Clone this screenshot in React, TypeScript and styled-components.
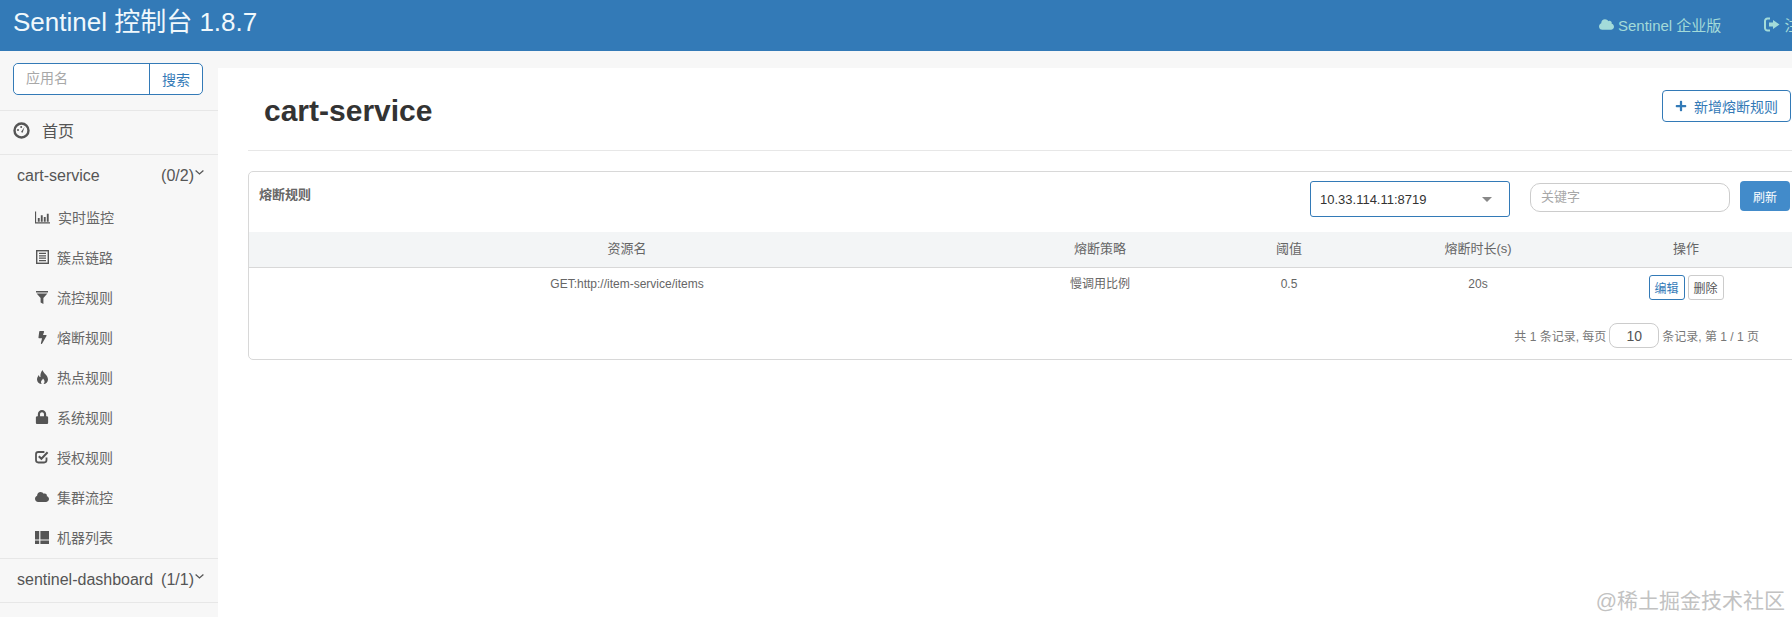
import { ReactNode } from 'react';
import styled, { createGlobalStyle } from 'styled-components';
import { FaBolt, FaCloud, FaLock, FaPlus } from 'react-icons/fa';

const GlobalStyle = createGlobalStyle`
  html, body {
    margin: 0;
    padding: 0;
    overflow: hidden;
    background: #fff;
    font-family: 'Liberation Sans', 'Noto Sans CJK SC', sans-serif;
  }
  * {
    box-sizing: border-box;
  }
`;

const GaugeIcon = () => (
  <svg width="17" height="17" viewBox="0 0 17 17">
    <circle cx="8.5" cy="8.5" r="7" fill="none" stroke="currentColor" strokeWidth="2.4" />
    <path d="M8 10 L11.5 5 L9.6 10.8 Z" fill="currentColor" />
    <circle cx="5" cy="8" r="1" fill="currentColor" />
    <circle cx="8.2" cy="5" r="1" fill="currentColor" />
  </svg>
);

const BarsIcon = () => (
  <svg width="15" height="13" viewBox="0 0 16 13">
    <path d="M0 0h1.2v11.6H16V13H0Z" fill="currentColor" />
    <path d="M3 7h2v4H3ZM6.2 4h2v7h-2ZM9.4 6h2v5h-2ZM12.6 2.5h2V11h-2Z" fill="currentColor" />
  </svg>
);

const ListIcon = () => (
  <svg width="13" height="14" viewBox="0 0 13 14">
    <rect x="0.7" y="0.7" width="11.6" height="12.6" fill="none" stroke="currentColor" strokeWidth="1.4" />
    <path d="M3 3.4h7M3 5.8h7M3 8.2h7M3 10.6h7" stroke="currentColor" strokeWidth="1.2" />
  </svg>
);

const FunnelIcon = () => (
  <svg width="12" height="13" viewBox="0 0 12 13">
    <path d="M0 0h12v1.4H0ZM0.6 2.4h10.8L7.4 7v6l-2.8-1.6V7Z" fill="currentColor" />
  </svg>
);

const FlameIcon = () => (
  <svg width="13" height="14" viewBox="0 0 13 14">
    <path
      d="M6.5 0C7 3 12 5 12 9.5 12 12 10 14 7.5 14 9 12.5 9 10.5 7 8.5 6.5 10 5 10.5 5 12 5 13 5.5 13.6 6 14 3 14 1 12 1 9.5 1 7.5 2 6 3 5 3 6.5 3.5 7 4.5 7 4 4 5 2 6.5 0Z"
      fill="currentColor"
    />
  </svg>
);

const CheckBoxIcon = () => (
  <svg width="14" height="14" viewBox="0 0 14 14">
    <path d="M11.5 7.5v2.6a2.4 2.4 0 0 1-2.4 2.4H3.4A2.4 2.4 0 0 1 1 10.1V4.4A2.4 2.4 0 0 1 3.4 2h6" fill="none" stroke="currentColor" strokeWidth="1.8" />
    <path d="M3.8 6.2 6.4 8.8 12.6 2.2" fill="none" stroke="currentColor" strokeWidth="2" />
  </svg>
);

const BlocksIcon = () => (
  <svg width="14" height="13" viewBox="0 0 14 13">
    <path d="M0 0h4.2v8.4H0ZM5.4 0H14v8.4H5.4ZM0 9.4h4.2V13H0ZM5.4 9.4H14V13H5.4Z" fill="currentColor" />
  </svg>
);

const SignOutIcon = () => (
  <svg width="16" height="15" viewBox="0 0 16 14">
    <path d="M6 1H3.5A2.5 2.5 0 0 0 1 3.5v7A2.5 2.5 0 0 0 3.5 13H6" fill="none" stroke="currentColor" strokeWidth="2" />
    <path d="M9 2.5 15.5 7 9 11.5V9H5V5h4Z" fill="currentColor" />
  </svg>
);

const ChevronIcon = () => (
  <svg width="9" height="5" viewBox="0 0 9 5">
    <path d="M0.6 0.6 4.5 4 8.4 0.6" fill="none" stroke="currentColor" strokeWidth="1.3" />
  </svg>
);

interface MenuEntry {
  label: string;
  icon: ReactNode;
}

const menuEntries: MenuEntry[] = [
  { label: '实时监控', icon: <BarsIcon /> },
  { label: '簇点链路', icon: <ListIcon /> },
  { label: '流控规则', icon: <FunnelIcon /> },
  { label: '熔断规则', icon: <FaBolt size={13} /> },
  { label: '热点规则', icon: <FlameIcon /> },
  { label: '系统规则', icon: <FaLock size={14} /> },
  { label: '授权规则', icon: <CheckBoxIcon /> },
  { label: '集群流控', icon: <FaCloud size={14} /> },
  { label: '机器列表', icon: <BlocksIcon /> },
];

const App = () => (
  <Page>
    <GlobalStyle />
    <TopBar>
      <Brand>Sentinel 控制台 1.8.7</Brand>
      <TopLinks>
        <TopLink>
          <FaCloud size={15} /> Sentinel 企业版
        </TopLink>
        <TopLink>
          <SignOutIcon /> 注销
        </TopLink>
      </TopLinks>
    </TopBar>
    <Body>
      <Sidebar>
        <SearchBox>
          <SearchInput placeholder="应用名" />
          <SearchButton>搜索</SearchButton>
        </SearchBox>
        <HomeRow>
          <GaugeIcon />
          首页
        </HomeRow>
        <AppRow>
          <span>cart-service</span>
          <AppCount>
            (0/2)
            <ChevronIcon />
          </AppCount>
        </AppRow>
        <MenuList>
          {menuEntries.map(entry => (
            <MenuItem key={entry.label}>
              <MenuIcon>{entry.icon}</MenuIcon>
              {entry.label}
            </MenuItem>
          ))}
        </MenuList>
        <AppRow $bordered>
          <span>sentinel-dashboard</span>
          <AppCount>
            (1/1)
            <ChevronIcon />
          </AppCount>
        </AppRow>
      </Sidebar>
      <Main>
        <PageHead>
          <PageTitle>cart-service</PageTitle>
          <AddButton>
            <FaPlus size={12} />
            新增熔断规则
          </AddButton>
        </PageHead>
        <Card>
          <CardBar>
            <CardTitle>熔断规则</CardTitle>
            <MachineSelect>
              10.33.114.11:8719
              <Caret />
            </MachineSelect>
            <KeywordInput placeholder="关键字" />
            <RefreshButton>刷新</RefreshButton>
          </CardBar>
          <HeadRow>
            <span>资源名</span>
            <span>熔断策略</span>
            <span>阈值</span>
            <span>熔断时长(s)</span>
            <span>操作</span>
          </HeadRow>
          <DataRow>
            <span>GET:http://item-service/items</span>
            <span>慢调用比例</span>
            <span>0.5</span>
            <span>20s</span>
            <Actions>
              <ActionButton $primary>编辑</ActionButton>
              <ActionButton>删除</ActionButton>
            </Actions>
          </DataRow>
          <Pager>
            共 1 条记录, 每页
            <PagerInput defaultValue="10" />
            条记录, 第 1 / 1 页
          </Pager>
        </Card>
      </Main>
    </Body>
    <Watermark>@稀土掘金技术社区</Watermark>
  </Page>
);

const Page = styled.div`
  position: relative;
  width: 1792px;
  height: 617px;
  overflow: hidden;
  background: #f7f7f7;
`;

const TopBar = styled.header`
  display: flex;
  justify-content: space-between;
  height: 51px;
  padding-left: 13px;
  background: #337ab7;
`;

const Brand = styled.div`
  padding-top: 6px;
  font-size: 26px;
  line-height: 32px;
  color: #f0f8fc;
`;

const TopLinks = styled.div`
  display: flex;
  flex-shrink: 0;
  gap: 43px;
  width: 193px;
  padding-top: 15px;
  white-space: nowrap;
`;

const TopLink = styled.div`
  display: flex;
  align-items: center;
  gap: 4px;
  height: 18px;
  font-size: 15px;
  color: #a3dbd9;
`;

const Body = styled.div`
  display: flex;
  height: 566px;
`;

const Sidebar = styled.aside`
  flex: 0 0 218px;
  padding-top: 12px;
`;

const SearchBox = styled.div`
  display: flex;
  width: 190px;
  height: 32px;
  margin: 0 0 15px 13px;
  border: 1px solid #337ab7;
  border-radius: 5px;
  background: #fff;
`;

const SearchInput = styled.input`
  width: 136px;
  padding: 0 12px 2px;
  border: 0;
  border-right: 1px solid #337ab7;
  border-radius: 5px 0 0 5px;
  outline: 0;
  font: 14px 'Liberation Sans', 'Noto Sans CJK SC', sans-serif;
  &::placeholder {
    color: #a8a8a8;
  }
`;

const SearchButton = styled.button`
  flex: 1;
  padding: 0;
  border: 0;
  background: none;
  font: 14px 'Liberation Sans', 'Noto Sans CJK SC', sans-serif;
  color: #337ab7;
`;

const HomeRow = styled.div`
  display: flex;
  align-items: center;
  gap: 12px;
  height: 45px;
  padding: 0 0 5px 13px;
  border-top: 1px solid #e7e7e7;
  border-bottom: 1px solid #e7e7e7;
  font-size: 16px;
  color: #555;
`;

const AppRow = styled.div<{ $bordered?: boolean }>`
  display: flex;
  justify-content: space-between;
  align-items: center;
  height: ${props => (props.$bordered ? '45px' : '43px')};
  padding: 0 14px 2px 17px;
  border-top: ${props => (props.$bordered ? '1px solid #e7e7e7' : '0')};
  border-bottom: ${props => (props.$bordered ? '1px solid #e7e7e7' : '0')};
  font-size: 16px;
  color: #555;
`;

const AppCount = styled.span`
  display: flex;
  align-items: flex-start;
  gap: 1px;
  line-height: 18px;
  svg {
    margin-top: 3px;
  }
`;

const MenuList = styled.ul`
  margin: 0;
  padding: 0 0 0 35px;
  list-style: none;
`;

const MenuItem = styled.li`
  display: flex;
  align-items: center;
  height: 40px;
  padding-bottom: 2px;
  font-size: 14px;
  color: #666;
`;

const MenuIcon = styled.span`
  display: flex;
  justify-content: center;
  min-width: 14px;
  margin-right: 8px;
  color: #555;
`;

const Main = styled.main`
  flex: 0 0 1600px;
  margin-top: 17px;
  padding-left: 30px;
  background: #fff;
`;

const PageHead = styled.div`
  display: flex;
  justify-content: space-between;
  align-items: flex-start;
  width: 1552px;
  height: 83px;
  padding: 23px 9px 0 16px;
  border-bottom: 1px solid #e7e7e7;
`;

const PageTitle = styled.h1`
  margin: 0;
  font-size: 30px;
  line-height: 40px;
  font-weight: 700;
  color: #333;
`;

const AddButton = styled.button`
  display: flex;
  align-items: center;
  gap: 7px;
  width: 129px;
  height: 32px;
  margin-top: -1px;
  padding: 0 0 0 12px;
  border: 1px solid #337ab7;
  border-radius: 4px;
  background: #fff;
  font: 14px 'Liberation Sans', 'Noto Sans CJK SC', sans-serif;
  color: #337ab7;
`;

const Card = styled.section`
  width: 1552px;
  height: 189px;
  margin-top: 20px;
  border: 1px solid #d8d8d8;
  border-radius: 5px;
`;

const CardBar = styled.div`
  display: flex;
  align-items: flex-start;
  height: 60px;
  padding: 9px 0 0 10px;
`;

const CardTitle = styled.div`
  flex: 0 0 1051px;
  padding-top: 3px;
  font-size: 13px;
  font-weight: 700;
  color: #666;
`;

const MachineSelect = styled.div`
  display: flex;
  justify-content: space-between;
  align-items: center;
  width: 200px;
  height: 36px;
  padding: 0 17px 0 9px;
  border: 1px solid #337ab7;
  border-radius: 3px;
  font-size: 13px;
  color: #333;
`;

const Caret = styled.span`
  border-top: 5px solid #888;
  border-left: 5px solid transparent;
  border-right: 5px solid transparent;
`;

const KeywordInput = styled.input`
  width: 200px;
  height: 29px;
  margin: 2px 10px 0 20px;
  padding: 0 10px 2px;
  border: 1px solid #ccc;
  border-radius: 10px;
  outline: 0;
  font: 13px 'Liberation Sans', 'Noto Sans CJK SC', sans-serif;
  &::placeholder {
    color: #a8a8a8;
  }
`;

const RefreshButton = styled.button`
  width: 50px;
  height: 30px;
  padding: 0;
  border: 0;
  border-radius: 4px;
  background: #428bca;
  font: 12px 'Liberation Sans', 'Noto Sans CJK SC', sans-serif;
  color: #fff;
`;

const tableColumns = '756px 190px 188px 190px 226px';

const HeadRow = styled.div`
  display: grid;
  grid-template-columns: ${tableColumns};
  align-items: center;
  height: 36px;
  padding-bottom: 4px;
  border-bottom: 1px solid #d8d8d8;
  background: #f3f5f6;
  font-size: 13px;
  color: #666;
  text-align: center;
`;

const DataRow = styled.div`
  display: grid;
  grid-template-columns: ${tableColumns};
  height: 55px;
  padding-top: 8px;
  font-size: 12px;
  line-height: 16px;
  color: #666;
  text-align: center;
`;

const Actions = styled.div`
  display: flex;
  justify-content: center;
  align-items: flex-start;
  gap: 3px;
  margin-top: -1px;
`;

const ActionButton = styled.button<{ $primary?: boolean }>`
  width: 36px;
  height: 25px;
  padding: 0;
  border: 1px solid ${props => (props.$primary ? '#337ab7' : '#ccc')};
  border-radius: 3px;
  background: #fff;
  font: 12px 'Liberation Sans', 'Noto Sans CJK SC', sans-serif;
  color: ${props => (props.$primary ? '#337ab7' : '#555')};
`;

const Pager = styled.div`
  display: flex;
  justify-content: flex-end;
  align-items: center;
  gap: 3px;
  height: 25px;
  padding-right: 40px;
  font-size: 12px;
  color: #777;
`;

const PagerInput = styled.input`
  width: 50px;
  height: 25px;
  padding: 0;
  border: 1px solid #ccc;
  border-radius: 8px;
  outline: 0;
  font: 14px 'Liberation Sans', sans-serif;
  color: #555;
  text-align: center;
`;

const Watermark = styled.div`
  position: absolute;
  right: 7px;
  bottom: 3px;
  font-size: 21px;
  line-height: 26px;
  color: #c2c2c2;
`;

export default App;
